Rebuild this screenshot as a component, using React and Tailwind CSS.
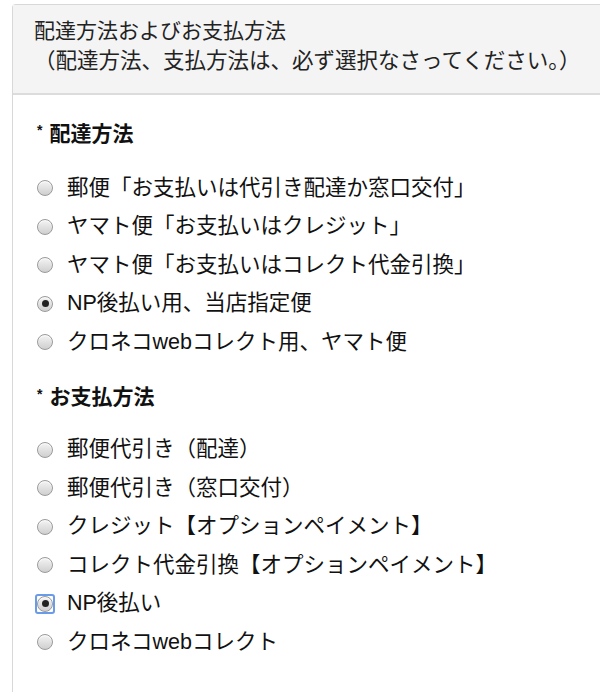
import React from "react";

const font = { fontFamily: '"Liberation Sans", "Noto Sans CJK JP", sans-serif' };

function Radio({ checked, focused }) {
  const circle = (
    <span className="relative flex h-[16px] w-[16px] items-center justify-center rounded-full border border-[#9a9a9a] bg-gradient-to-b from-[#f4f4f4] to-[#cfcfcf] shadow-[inset_0_1px_1px_rgba(255,255,255,0.8)]">
      {checked && <span className="h-[7px] w-[7px] rounded-full bg-[#222]" />}
    </span>
  );
  if (focused) {
    return (
      <span className="flex h-[20px] w-[20px] items-center justify-center rounded-[3px] border-2 border-[#6a9be8]">
        {circle}
      </span>
    );
  }
  return <span className="flex h-[20px] w-[20px] items-center justify-center">{circle}</span>;
}

function Row({ label, checked, focused }) {
  return (
    <div className="flex h-[38.5px] items-center">
      <Radio checked={checked} focused={focused} />
      <span className="ml-[12px] text-[21.5px] leading-none text-[#111]">{label}</span>
    </div>
  );
}

function Heading({ children }) {
  return (
    <div className="flex h-[30px] items-center">
      <span className="ml-[2px] mr-[7px] self-start pt-[5px] text-[14px] leading-none font-bold text-[#111]">*</span>
      <span className="text-[21px] leading-none font-bold text-[#111]">{children}</span>
    </div>
  );
}

export default function App() {
  const ship = [
    "郵便「お支払いは代引き配達か窓口交付」",
    "ヤマト便「お支払いはクレジット」",
    "ヤマト便「お支払いはコレクト代金引換」",
    "NP後払い用、当店指定便",
    "クロネコwebコレクト用、ヤマト便",
  ];
  const pay = [
    "郵便代引き（配達）",
    "郵便代引き（窓口交付）",
    "クレジット【オプションペイメント】",
    "コレクト代金引換【オプションペイメント】",
    "NP後払い",
    "クロネコwebコレクト",
  ];
  return (
    <div className="h-[692px] w-[600px] overflow-hidden bg-white" style={font}>
      <div className="ml-[12px] mt-[4px] h-[700px] w-[620px] rounded-tl-[4px] border-l border-t border-[#d8d8d8]">
        <div className="border-b-2 border-[#dcdcdc] bg-[#f4f4f4] pb-[17px] pl-[21px] pt-[11px] text-[#222]">
          <div className="text-[21px] leading-[30px]">配達方法およびお支払方法</div>
          <div className="text-[21.5px] leading-[30px]">（配達方法、支払方法は、必ず選択なさってください。）</div>
        </div>
        <div className="pl-[22px] pt-[23px]">
          <Heading>配達方法</Heading>
          <div className="mt-[21px]">
            {ship.map((s, i) => (
              <Row key={s} label={s} checked={i === 3} />
            ))}
          </div>
          <div className="mt-[20px]">
            <Heading>お支払方法</Heading>
          </div>
          <div className="mt-[19px]">
            {pay.map((s, i) => (
              <Row key={s} label={s} checked={i === 4} focused={i === 4} />
            ))}
          </div>
        </div>
      </div>
    </div>
  );
}
